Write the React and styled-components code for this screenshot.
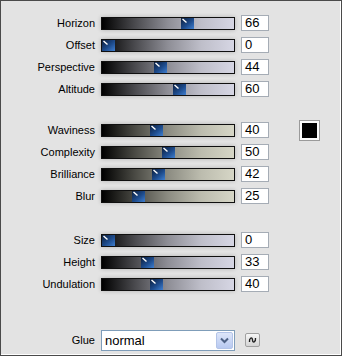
import React from 'react';
import styled, { createGlobalStyle } from 'styled-components';

const GlobalStyle = createGlobalStyle`
  html, body {
    margin: 0;
    padding: 0;
    background: #e3e3e3;
  }
  * { box-sizing: border-box; }
`;

const Panel = styled.div`
  width: 342px;
  height: 356px;
  background: #e3e3e3;
  border: 1px solid #4a4a4a;
  box-shadow: inset -1px -1px 0 #ffffff;
  padding-top: 11px;
  font-family: "Liberation Sans", Arial, sans-serif;
  font-size: 11px;
  color: #000;
`;

const Group = styled.div`
  display: flex;
  flex-direction: column;
  margin-bottom: ${p => p.$gap || 0}px;
`;

const Row = styled.div`
  display: grid;
  grid-template-columns: 94px 134px 28px auto;
  column-gap: 6px;
  align-items: center;
  height: 22px;
`;

const Label = styled.div`
  text-align: right;
  white-space: nowrap;
`;

const Track = styled.div`
  position: relative;
  height: 13px;
  border: 1px solid #101010;
  background: ${p => p.$tint === 'sand'
    ? 'linear-gradient(to right, #000 0%, #4a4a44 25%, #8c8c82 50%, #bcbcae 75%, #d6d6c6 100%)'
    : 'linear-gradient(to right, #000 0%, #4a4a4e 25%, #8e8e96 50%, #bebec9 75%, #d6d6e4 100%)'};
  box-shadow: 0 0 4px rgba(0, 0, 0, 0.22);
`;

const Thumb = styled.svg`
  position: absolute;
  top: 0;
  width: 13px;
  height: 11px;
  display: block;
`;

const ValueBox = styled.div`
  height: 16px;
  background: #fff;
  border: 1px solid #a5acb5;
  font-size: 13px;
  line-height: 14px;
  padding-left: 3px;
`;

const Swatch = styled.div`
  margin-left: 25px;
  width: 19px;
  height: 19px;
  background: #000;
  border: 2px solid #fbfbfb;
  outline: 1px solid #9a9a9a;
`;

const GlueRow = styled.div`
  display: grid;
  grid-template-columns: 94px 134px auto;
  column-gap: 6px;
  align-items: center;
  height: 22px;
`;

const Select = styled.div`
  display: flex;
  height: 21px;
  background: #fff;
  border: 1px solid #7f9db9;
  font-size: 13px;
`;

const SelectText = styled.div`
  flex: 1;
  padding-left: 3px;
  line-height: 19px;
`;

const Arrow = styled.div`
  width: 17px;
  margin: 1px;
  border: 1px solid #b3c4e8;
  border-radius: 2px;
  background: linear-gradient(#dde6f9, #b8c9f1);
  display: flex;
  align-items: center;
  justify-content: center;
`;

const SmallButton = styled.div`
  margin-left: 4px;
  width: 15px;
  height: 14px;
  border: 1px solid #a0a0a0;
  border-radius: 2px;
  background: linear-gradient(#f6f6f6, #d4d4d4);
  display: flex;
  align-items: center;
  justify-content: center;
`;

function ThumbIcon({ left }) {
  return (
    <Thumb viewBox="0 0 13 11" style={{ left }}>
      <rect x="0" y="0" width="13" height="11" fill="url(#th)" />
      <line x1="1.5" y1="1" x2="5.5" y2="4.5" stroke="#fff" strokeWidth="1.4" />
    </Thumb>
  );
}

function Slider({ label, value, tint, extra }) {
  const left = Math.round((value / 100) * (132 - 13));
  return (
    <Row>
      <Label>{label}</Label>
      <Track $tint={tint}>
        <ThumbIcon left={left} />
      </Track>
      <ValueBox>{value}</ValueBox>
      {extra}
    </Row>
  );
}

const groupA = [
  { label: 'Horizon', value: 66 },
  { label: 'Offset', value: 0 },
  { label: 'Perspective', value: 44 },
  { label: 'Altitude', value: 60 },
];

const groupB = [
  { label: 'Waviness', value: 40 },
  { label: 'Complexity', value: 50 },
  { label: 'Brilliance', value: 42 },
  { label: 'Blur', value: 25 },
];

const groupC = [
  { label: 'Size', value: 0 },
  { label: 'Height', value: 33 },
  { label: 'Undulation', value: 40 },
];

export default function App() {
  return (
    <>
      <GlobalStyle />
      <svg width="0" height="0" style={{ position: 'absolute' }}>
        <defs>
          <linearGradient id="th" x1="0" y1="0" x2="1" y2="1">
            <stop offset="0" stopColor="#0c1e3c" />
            <stop offset="0.55" stopColor="#1d4b8c" />
            <stop offset="1" stopColor="#3f7fd0" />
          </linearGradient>
        </defs>
      </svg>
      <Panel>
        <Group $gap={19}>
          {groupA.map(s => <Slider key={s.label} {...s} />)}
        </Group>
        <Group $gap={22}>
          {groupB.map((s, i) => (
            <Slider key={s.label} {...s} tint="sand" extra={i === 0 ? <Swatch /> : null} />
          ))}
        </Group>
        <Group $gap={34}>
          {groupC.map(s => <Slider key={s.label} {...s} />)}
        </Group>
        <GlueRow>
          <Label>Glue</Label>
          <Select>
            <SelectText>normal</SelectText>
            <Arrow>
              <svg width="9" height="7" viewBox="0 0 9 7">
                <path d="M1 1.5 L4.5 5 L8 1.5" fill="none" stroke="#4d6185" strokeWidth="2" />
              </svg>
            </Arrow>
          </Select>
          <SmallButton>
            <svg width="9" height="8" viewBox="0 0 9 8">
              <path d="M1.5 6 C1 2, 4.5 0.5, 4.5 4 C4.5 7.5, 8 6, 7.5 2" fill="none" stroke="#222" strokeWidth="1.4" />
            </svg>
          </SmallButton>
        </GlueRow>
      </Panel>
    </>
  );
}
